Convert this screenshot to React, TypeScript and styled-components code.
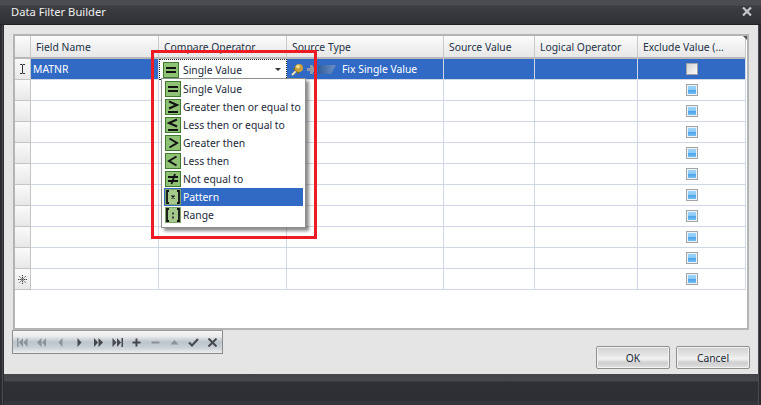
import React from 'react';
import styled, { createGlobalStyle } from 'styled-components';

const Global = createGlobalStyle`
  html, body { margin: 0; padding: 0; width: 761px; height: 405px; overflow: hidden; background: #2e2f33; }
  #root { width: 761px; height: 405px; }
  * { box-sizing: border-box; }
`;

const FONT = `"Noto Sans", "DejaVu Sans", sans-serif`;

const Frame = styled.div`
  position: relative;
  width: 761px;
  height: 405px;
  display: flex;
  flex-direction: column;
  font-family: ${FONT};
  font-size: 10.35px;
  color: #1d2a3a;
  background: linear-gradient(90deg, #2a2b2e 0, #2a2b2e 2px, #4a4b50 2px, #4a4b50 3px, #2a2b2e 3px, #2a2b2e 757px, #4a4b50 757px, #4a4b50 759px, #2a2b2e 759px);
  overflow: hidden;
`;
const TitleBar = styled.div`
  height: 25px;
  flex: none;
  display: flex;
  align-items: center;
  justify-content: space-between;
  padding: 0 9px 2px 11px;
  background: linear-gradient(#4b4c51 0, #4b4c51 5px, #3d3e42 6px, #2f3034 24px);
  border-bottom: 1px solid #222;
`;
const Title = styled.span`
  color: #f0f0f0;
  font-size: 11.2px;
`;
const Body = styled.div`
  flex: none;
  height: 349px;
  margin: 0 3px 0 4px;
  background: #e5e5e5;
  padding: 9px 9px 6px 9px;
  display: flex;
  flex-direction: column;
`;
const Panel = styled.div`
  height: 296px;
  flex: none;
  background: #fff;
  border: 2px solid #b4b4b4;
  position: relative;
  &::after {
    content: '';
    position: absolute;
    right: 0;
    top: 0;
    width: 0;
    height: 0;
    border-top: 4px solid #555;
    border-left: 4px solid transparent;
  }
`;
const Grid = styled.div`
  display: grid;
  grid-template-columns: 16px 128px 128px 157px 91px 103px 108px;
`;
const HeadCell = styled.div`
  height: 23px;
  display: flex;
  align-items: center;
  padding-left: 5px;
  background: linear-gradient(#fbfbfb, #e7e7e7);
  border-right: 1px solid #c9c9c9;
  border-bottom: 2px solid #b8b8b8;
  white-space: nowrap;
  color: #253246;
`;
const Indicator = styled.div`
  height: 21px;
  display: flex;
  align-items: center;
  justify-content: center;
  background: linear-gradient(#fafafa, #e8e8e8);
  border-right: 1px solid #c4c4c4;
  border-bottom: 1px solid #c4c4c4;
  color: #333;
`;
const Cell = styled.div<{ $selected?: boolean; $center?: boolean }>`
  height: 21px;
  display: flex;
  align-items: center;
  justify-content: ${(p) => (p.$center ? 'center' : 'flex-start')};
  padding-left: ${(p) => (p.$center ? 0 : 2)}px;
  background: ${(p) => (p.$selected ? '#316ac5' : '#fff')};
  color: ${(p) => (p.$selected ? '#fff' : '#1d2a3a')};
  border-right: 1px solid #d0d7e5;
  border-bottom: 1px solid #d0d7e5;
  white-space: nowrap;
`;
const EditorCell = styled.div`
  height: 21px;
  display: flex;
  align-items: center;
  padding: 0 5px 0 3px;
  gap: 4px;
  background: #fff;
  border: 1px dotted #222;
`;
const EditorText = styled.span`
  flex: 1;
  color: #1d2a3a;
`;
const Arrow = styled.span`
  width: 0;
  height: 0;
  border-left: 3px solid transparent;
  border-right: 3px solid transparent;
  border-top: 3px solid #333;
`;
const SourceCell = styled(Cell)`
  padding-left: 4px;
`;
const SourceLabel = styled.span`
  margin-left: 6px;
`;
const Check = styled.span<{ $filled?: boolean }>`
  width: 12px;
  height: 12px;
  border: 1px solid #a3a3a3;
  background: ${(p) => (p.$filled ? '#eaf4fb' : 'linear-gradient(135deg,#d4d4d4,#fafafa)')};
  padding: 1px;
  display: flex;
`;
const CheckFill = styled.span`
  flex: 1;
  background: linear-gradient(#9ed4f8 0, #8ccbf6 45%, #4aa3ea 50%, #74bdf2 100%);
`;
const BottomRow = styled.div`
  flex: 1;
  display: flex;
  justify-content: space-between;
  align-items: flex-start;
`;
const NavBar = styled.div`
  margin-left: -1px;
  width: 211px;
  height: 24px;
  display: flex;
  align-items: center;
  border: 1px solid #8c8c8c;
  border-top-color: #9a9a9a;
  background: linear-gradient(#f6f6f6 0, #e8eaec 25%, #bcc5cc 50%, #c9d0d6 75%, #eceeef 100%);
`;
const NavButton = styled.span`
  width: 19px;
  height: 14px;
  flex: none;
  display: flex;
  align-items: center;
  justify-content: center;
`;
const Buttons = styled.div`
  display: flex;
  gap: 6px;
  margin-top: 16px;
  margin-right: -1px;
`;
const Button = styled.div`
  width: 74px;
  height: 23px;
  display: flex;
  align-items: center;
  justify-content: center;
  border: 1px solid #8f8f8f;
  border-radius: 2px;
  box-shadow: inset 0 0 0 1px #f4f4f4;
  background: linear-gradient(#d0d0d0 0, #e6e6e6 40%, #f2f2f2 55%, #cfcfcf 75%, #e0e0e0 100%);
  color: #1d2a3a;
`;
const Footer = styled.div`
  flex: 1;
  margin: 0 3px 0 4px;
  border-bottom: 4px solid #34353a;
  background: linear-gradient(#44454a 0, #46474c 7px, #2f3034 8px, #2e2f33 100%);
`;
const Menu = styled.div`
  position: absolute;
  left: 161px;
  top: 78px;
  width: 145px;
  height: 150px;
  background: #fff;
  border: 1px solid #8e8e8e;
  box-shadow: 3px 3px 3px rgba(0, 0, 0, 0.45);
  padding: 1px 2px;
  display: flex;
  flex-direction: column;
`;
const MenuItem = styled.div<{ $active?: boolean }>`
  height: 18px;
  flex: none;
  display: flex;
  align-items: center;
  gap: 2px;
  padding-left: 1px;
  white-space: nowrap;
  background: ${(p) => (p.$active ? '#316ac5' : 'transparent')};
  color: ${(p) => (p.$active ? '#fff' : '#1d2a3a')};
`;
const Highlight = styled.div`
  position: absolute;
  left: 151px;
  top: 50px;
  width: 166px;
  height: 189px;
  border: 3px solid #ed1c24;
  pointer-events: none;
`;

type Op = 'eq' | 'ge' | 'le' | 'gt' | 'lt' | 'ne' | 'pat' | 'rng';

const OpGlyph: Record<Op, React.ReactNode> = {
  eq: <path d="M3 6h10M3 10h10" strokeWidth="2" />,
  ge: <path d="M4 2.5l8 3.5-8 3.5M3 13h10" />,
  le: <path d="M12 2.5l-8 3.5 8 3.5M3 13h10" />,
  gt: <path d="M4.5 3.5l7.5 4.5-7.5 4.5" />,
  lt: <path d="M11.5 3.5l-7.5 4.5 7.5 4.5" />,
  ne: <path d="M3 6h10M3 10h10M10 3L6.5 13" strokeWidth="1.8" />,
  pat: (
    <>
      <path d="M4 2H2v12h2M12 2h2v12h-2" strokeWidth="1.8" />
      <path d="M6.5 6.5l3 3M9.5 6.5l-3 3" strokeWidth="1.3" />
    </>
  ),
  rng: (
    <>
      <path d="M4 2H2v12h2M12 2h2v12h-2" strokeWidth="1.8" />
      <path d="M8 5.5v2M8 9.5v2" strokeWidth="1.5" />
    </>
  ),
};

const OpIcon = ({ op }: { op: Op }) => {
  const bracket = op === 'pat' || op === 'rng';
  return (
    <svg width="16" height="16" viewBox="0 0 16 16" style={{ flex: 'none' }}>
      <rect
        x="0.5"
        y="0.5"
        width="15"
        height="15"
        fill={bracket ? '#a5c98c' : '#8fc274'}
        stroke={bracket ? '#7fa868' : '#3f7a2e'}
      />
      <g fill="none" stroke="#111" strokeWidth="2">
        {OpGlyph[op]}
      </g>
    </svg>
  );
};

const Pin = () => (
  <svg width="13" height="13" viewBox="0 0 13 13" style={{ flex: 'none' }}>
    <path d="M5 8l-4 4" stroke="#f4e6a8" strokeWidth="1.8" />
    <path d="M3 5l5 5" stroke="#8a6a1e" strokeWidth="2.4" />
    <circle cx="8" cy="5" r="4" fill="#c9a23c" />
    <circle cx="7" cy="3.6" r="1.7" fill="#f6e6a6" />
  </svg>
);
const Plug = () => (
  <svg width="10" height="11" viewBox="0 0 10 11" style={{ flex: 'none', marginLeft: 3 }}>
    <path d="M0 4h3V1h3v2h3v5H6v2H3V7H0z" fill="#8f9aa8" />
  </svg>
);
const Ribbon = () => (
  <svg width="18" height="9" viewBox="0 0 18 9" style={{ flex: 'none', marginLeft: 1 }}>
    <defs>
      <linearGradient id="rb" x1="0" x2="1" y1="0" y2="0">
        <stop offset="0" stopColor="#2f5f9c" />
        <stop offset="1" stopColor="#6f8fc4" />
      </linearGradient>
    </defs>
    <path d="M0 0h18l-5 9H0z" fill="url(#rb)" />
  </svg>
);
const IBeam = () => (
  <svg width="7" height="10" viewBox="0 0 7 10">
    <path d="M1 0.5h2l.5.5.5-.5h2M3.5 1v8M1 9.5h2l.5-.5.5.5h2" stroke="#333" fill="none" />
  </svg>
);
const Star = () => (
  <svg width="9" height="9" viewBox="0 0 9 9">
    <path d="M4.5 0v9M0 4.5h9M1.3 1.3l6.4 6.4M7.7 1.3L1.3 7.7" stroke="#444" strokeDasharray="1.4 .6" fill="none" />
  </svg>
);

const navColor = (on: boolean) => (on ? '#45484d' : '#8c9299');
const Nav = ({ d, on, stroke }: { d: string; on: boolean; stroke?: boolean }) => (
  <NavButton>
    <svg width="11" height="9" viewBox="0 0 11 9">
      <path
        d={d}
        fill={stroke ? 'none' : navColor(on)}
        stroke={stroke ? navColor(on) : 'none'}
        strokeWidth={stroke ? 2 : 0}
      />
    </svg>
  </NavButton>
);

const navs: { d: string; on: boolean; stroke?: boolean }[] = [
  { d: 'M0 0h1.5v9H0zM6 0v9L2 4.5zM10.5 0v9l-4-4.5z', on: false },
  { d: 'M5.5 0v9l-4.5-4.5zM10 0v9L6 4.5z', on: false },
  { d: 'M7.5 0v9L3.5 4.5z', on: false },
  { d: 'M3.5 0v9l4-4.5z', on: true },
  { d: 'M1 0v9l4-4.5zM5.5 0v9l4.5-4.5z', on: true },
  { d: 'M0.5 0v9l4-4.5zM5 0v9l4-4.5zM9.5 0H11v9H9.5z', on: true },
  { d: 'M5.5 0.5v8M1.5 4.5h8', on: true, stroke: true },
  { d: 'M1.5 4.5h8', on: false, stroke: true },
  { d: 'M5.5 2l4 4.5h-8z', on: false },
  { d: 'M1 4.5l3 3L10 1', on: true, stroke: true },
  { d: 'M1.5 0.5l8 8M9.5 0.5l-8 8', on: true, stroke: true },
];

const headers = ['', 'Field Name', 'Compare Operator', 'Source Type', 'Source Value', 'Logical Operator', 'Exclude Value (...'];

const menu: { op: Op; label: string; active?: boolean }[] = [
  { op: 'eq', label: 'Single Value' },
  { op: 'ge', label: 'Greater then or equal to' },
  { op: 'le', label: 'Less then or equal to' },
  { op: 'gt', label: 'Greater then' },
  { op: 'lt', label: 'Less then' },
  { op: 'ne', label: 'Not equal to' },
  { op: 'pat', label: 'Pattern', active: true },
  { op: 'rng', label: 'Range' },
];

const emptyRows = Array.from({ length: 10 }, (_, i) => i);

export default function App() {
  return (
    <>
      <Global />
      <Frame>
        <TitleBar>
          <Title>Data Filter Builder</Title>
          <svg width="10" height="9" viewBox="0 0 10 9">
            <path d="M1 0.5l8 8M9 0.5l-8 8" stroke="#c4c6ca" strokeWidth="2.2" fill="none" />
          </svg>
        </TitleBar>
        <Body>
          <Panel>
            <Grid>
              {headers.map((h, i) => (
                <HeadCell key={i}>{h}</HeadCell>
              ))}
              <Indicator>
                <IBeam />
              </Indicator>
              <Cell $selected>MATNR</Cell>
              <EditorCell>
                <OpIcon op="eq" />
                <EditorText>Single Value</EditorText>
                <Arrow />
              </EditorCell>
              <SourceCell $selected>
                <Pin />
                <Plug />
                <Ribbon />
                <SourceLabel>Fix Single Value</SourceLabel>
              </SourceCell>
              <Cell $selected />
              <Cell $selected />
              <Cell $selected $center>
                <Check />
              </Cell>
              {emptyRows.map((r) => (
                <React.Fragment key={r}>
                  <Indicator>{r === 9 ? <Star /> : null}</Indicator>
                  <Cell />
                  <Cell />
                  <Cell />
                  <Cell />
                  <Cell />
                  <Cell $center>
                    <Check $filled>
                      <CheckFill />
                    </Check>
                  </Cell>
                </React.Fragment>
              ))}
            </Grid>
          </Panel>
          <BottomRow>
            <NavBar>
              {navs.map((n, i) => (
                <Nav key={i} {...n} />
              ))}
            </NavBar>
            <Buttons>
              <Button>OK</Button>
              <Button>Cancel</Button>
            </Buttons>
          </BottomRow>
        </Body>
        <Footer />
        <Menu>
          {menu.map((m) => (
            <MenuItem key={m.label} $active={m.active}>
              <OpIcon op={m.op} />
              {m.label}
            </MenuItem>
          ))}
        </Menu>
        <Highlight />
      </Frame>
    </>
  );
}
